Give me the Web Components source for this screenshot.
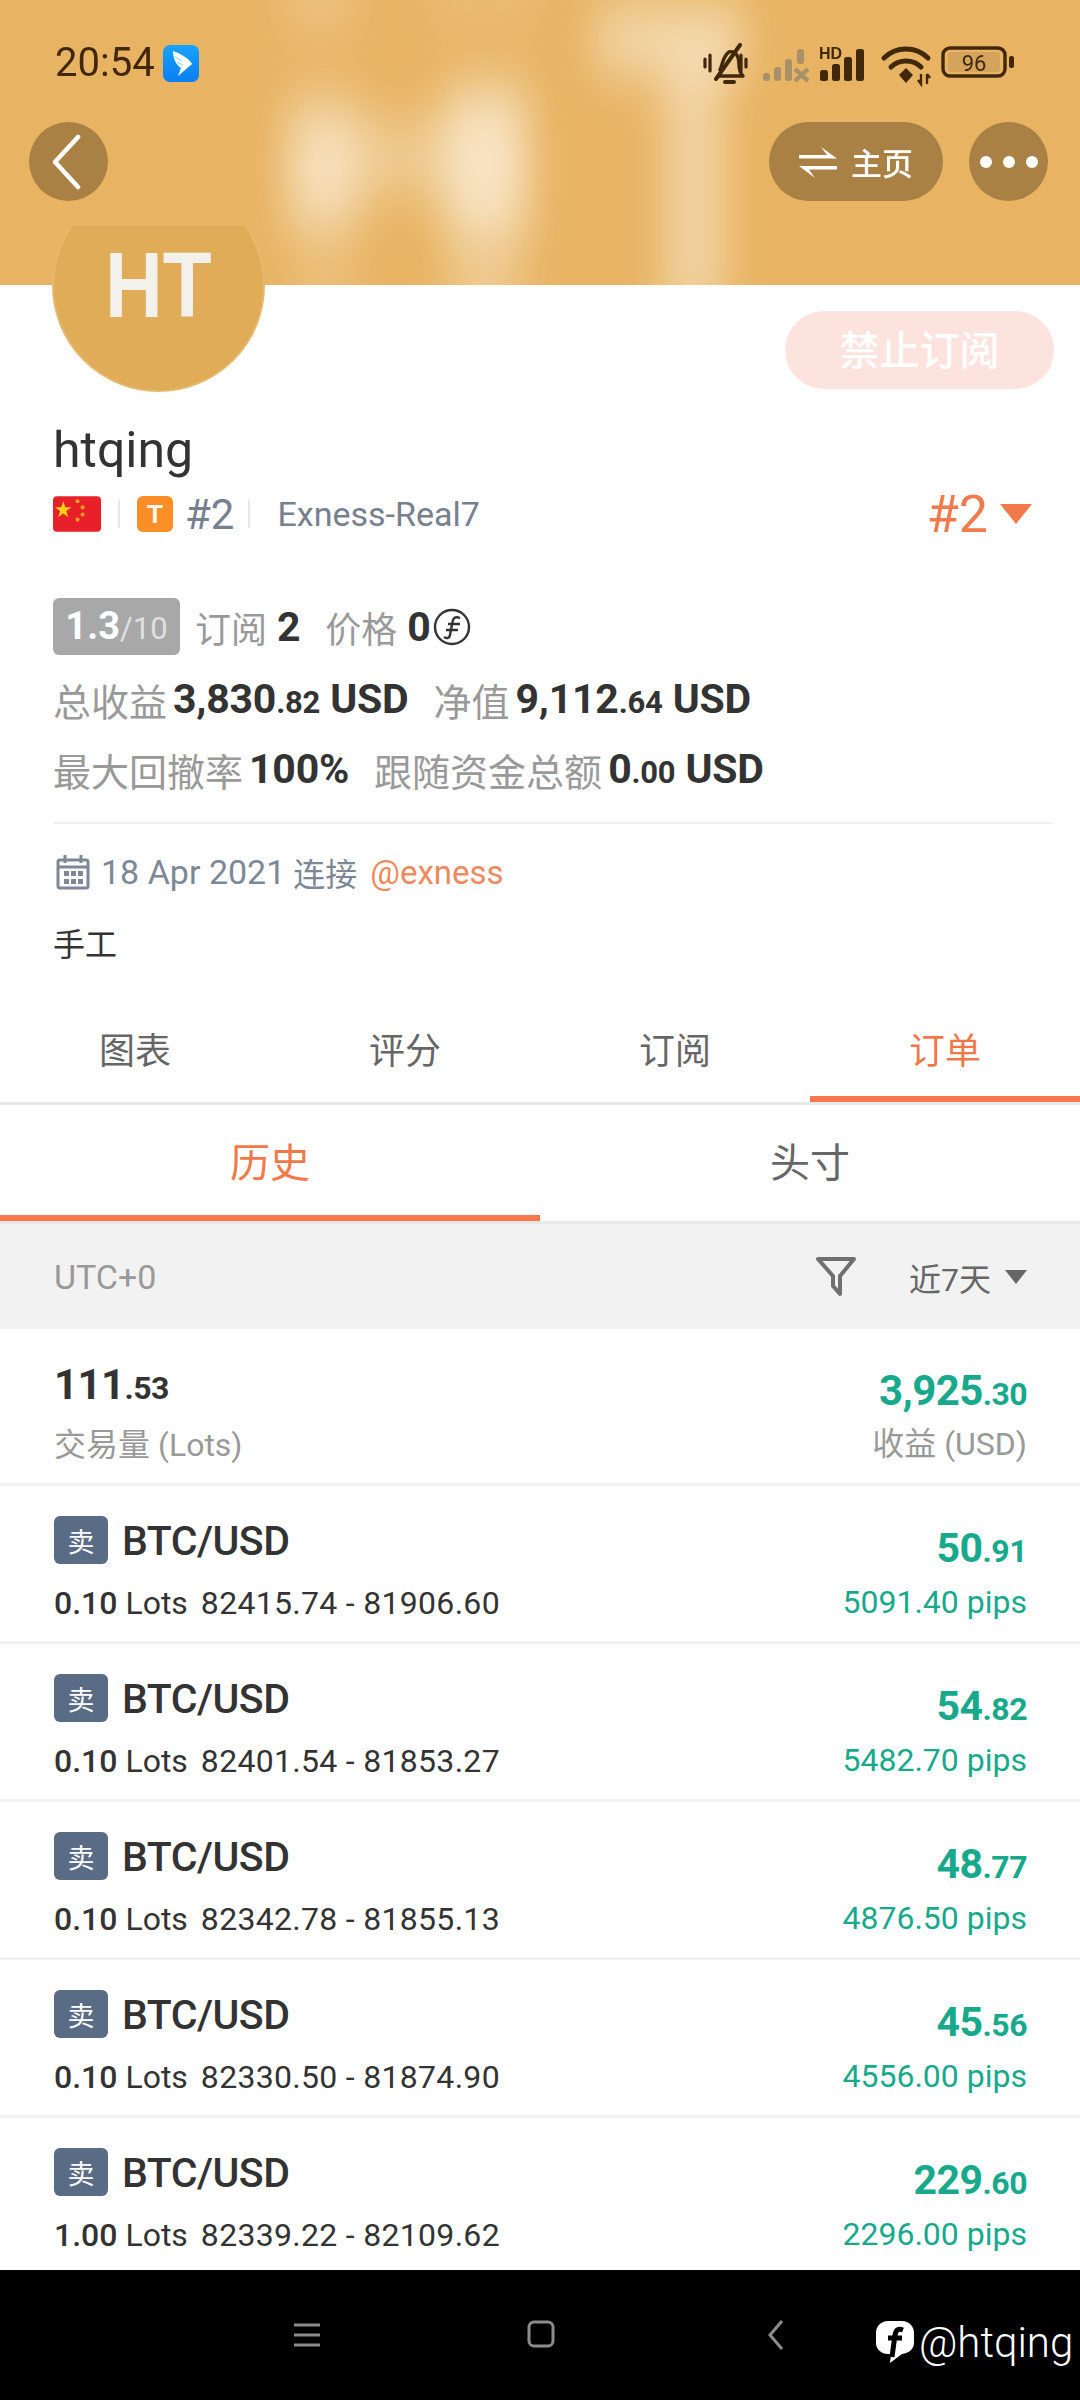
<!DOCTYPE html>
<html lang="zh">
<head>
<meta charset="utf-8">
<title>htqing</title>
<style>
  html, body { margin: 0; padding: 0; background: #fff; }
  body { width: 1080px; height: 2400px; overflow: hidden; font-family: Roboto, "Noto Sans CJK SC", sans-serif; }
</style>
</head>
<body>
<profile-header></profile-header>
<trader-info></trader-info>
<tab-bar items="图表,评分,订阅,订单" active="3" size="36" height="99" shift="12"></tab-bar>
<tab-bar items="历史,头寸" active="0" size="40" height="119" shift="6"></tab-bar>
<filter-bar></filter-bar>
<order-summary></order-summary>
<order-row lots="0.10" prices="82415.74 - 81906.60" amount="50" cents="91" pips="5091.40 pips"></order-row>
<order-row lots="0.10" prices="82401.54 - 81853.27" amount="54" cents="82" pips="5482.70 pips"></order-row>
<order-row lots="0.10" prices="82342.78 - 81855.13" amount="48" cents="77" pips="4876.50 pips"></order-row>
<order-row lots="0.10" prices="82330.50 - 81874.90" amount="45" cents="56" pips="4556.00 pips"></order-row>
<order-row lots="1.00" prices="82339.22 - 82109.62" amount="229" cents="60" pips="2296.00 pips" last></order-row>
<nav-bar></nav-bar>

<script>
const CJK = 'Roboto, "Noto Sans CJK SC", sans-serif';

// шапка: статус-бар, кнопки, аватар
class ProfileHeader extends HTMLElement {
  connectedCallback() {
    this.attachShadow({ mode: 'open' });
    this.shadowRoot.innerHTML = `
      <style>
        :host { display: block; position: relative; height: 285px; background: #e8b464; font-family: ${CJK}; overflow: visible; }
        .blur { position: absolute; inset: 0; width: 1080px; height: 285px; }
        .status { position: relative; display: flex; align-items: center; height: 44px; padding: 41px 0 0 55px; }
        .time { font-size: 40px; color: #41280a; line-height: 44px; width: 108px; }
        .icons { margin-left: auto; display: flex; align-items: center; width: 377px; height: 44px; }
        .icons svg { margin-top: 4px; }
        .actions { position: relative; display: flex; align-items: center; padding: 37px 32px 0 29px; }
        .round { width: 79px; height: 79px; border-radius: 50%; background: #a98144; display: flex; align-items: center; justify-content: center; }
        .pill { margin-left: auto; width: 174px; height: 79px; border-radius: 40px; background: #a98144; display: flex; align-items: center; justify-content: center; gap: 14px; color: #fff; font-size: 31px; font-weight: 500; margin-right: 26px; }
        .dots { gap: 11px; }
        .dots i { width: 12px; height: 12px; border-radius: 50%; background: #fff; }
        .avatar { position: absolute; left: 52px; top: 226px; width: 213px; height: 167px; overflow: hidden; z-index: 2; }
        .circle { width: 213px; height: 213px; margin-top: -47px; border-radius: 50%; background: #e0ac58; box-sizing: border-box; border: 2px solid #e6b86e; display: flex; align-items: center; justify-content: center; color: #f3f1ec; font-size: 92px; font-weight: 700; font-family: "Liberation Sans", sans-serif; }
        .circle span { display: inline-block; transform: scaleX(.87); }
      </style>
      <svg class="blur" viewBox="0 0 1080 285" aria-hidden="true">
        <defs><filter id="b" x="-80%" y="-80%" width="260%" height="260%"><feGaussianBlur stdDeviation="20 30"/></filter></defs>
        <g filter="url(#b)" fill="#f9e8cc">
          <rect x="288" y="105" width="70" height="125" opacity=".85"/>
          <rect x="445" y="90" width="82" height="150" opacity=".92"/>
          <rect x="350" y="130" width="100" height="55" opacity=".6"/>
          <rect x="595" y="10" width="150" height="58" opacity=".8"/>
          <rect x="664" y="40" width="60" height="290" opacity=".6"/>
          <rect x="285" y="-50" width="70" height="80" opacity=".3"/>
          <rect x="430" y="-50" width="110" height="70" opacity=".2"/>
          <rect x="300" y="262" width="50" height="70" opacity=".3"/>
          <rect x="450" y="262" width="70" height="70" opacity=".5"/>
        </g>
      </svg>
      <div class="status">
        <span class="time">20:54</span>
        <svg width="36" height="37" viewBox="0 0 36 37">
          <defs><linearGradient id="fs" x1="0" y1="0" x2="0" y2="1"><stop offset="0" stop-color="#17a3fb"/><stop offset="1" stop-color="#0b7ff0"/></linearGradient></defs>
          <rect width="36" height="37" rx="7" fill="url(#fs)"/>
          <path d="M10 6 C17 8 27 14 29 19 L15 31 L18 23 C13 20 10 13 10 6Z" fill="#fff"/>
          <path d="M12 12 L19 16 M14 17 L20 20" stroke="#9fd4fb" stroke-width="1.2"/>
        </svg>
        <div class="icons">
          <svg width="377" height="44" viewBox="0 0 377 44" fill="none">
            <!-- колокольчик без звука -->
            <g stroke="#41280a" stroke-linecap="round">
              <path d="M17 27 C20 20 20 13 26 9 C33 7 36 14 36 21 C36 26 37 30 40 33 L16 33" stroke-width="3.4" stroke-linejoin="round"/>
              <path d="M13 36 L37 2" stroke-width="4"/>
              <path d="M2 16V24 M7 12V28 M38 12V28 M43 16V24" stroke-width="3.2"/>
              <path d="M22 39 H31" stroke-width="4"/>
            </g>
            <!-- сигнал sim1 -->
            <g fill="#a89068">
              <rect x="60" y="30" width="7" height="8" rx="3"/>
              <rect x="71" y="24" width="7" height="14" rx="3"/>
              <rect x="82" y="16" width="7" height="22" rx="3"/>
              <rect x="94" y="6" width="7" height="15" rx="3"/>
            </g>
            <path d="M92 26 L105 38 M105 26 L92 38" stroke="#a89068" stroke-width="4.4"/>
            <!-- сигнал sim2 с HD -->
            <text x="116" y="16" font-family="Liberation Sans, sans-serif" font-weight="700" font-size="16" fill="#41280a">HD</text>
            <g fill="#41280a">
              <rect x="117" y="27" width="8" height="11" rx="2.5"/>
              <rect x="129" y="21" width="8" height="17" rx="2.5"/>
              <rect x="141" y="14" width="8" height="24" rx="2.5"/>
              <rect x="153" y="6" width="8" height="32" rx="2.5"/>
            </g>
            <!-- wifi -->
            <g stroke="#41280a" stroke-width="5" stroke-linecap="round">
              <path d="M181 15 C193 3 213 3 225 15"/>
              <path d="M188 24 C196 16 210 16 218 24"/>
            </g>
            <path d="M196 32 L203 25 L210 32 L203 40Z" fill="#41280a"/>
            <path d="M218 31V40 M215 37L218 41L218 37 M224 31V41 M224 31L227 35" stroke="#41280a" stroke-width="2.4"/>
            <!-- батарея -->
            <rect x="240" y="5" width="62" height="28" rx="7" stroke="#41280a" stroke-width="3.4"/>
            <rect x="245" y="9" width="52" height="20" rx="3" fill="#d4a45c"/>
            <rect x="306" y="13" width="5" height="12" rx="2" fill="#41280a"/>
            <text x="271" y="28" text-anchor="middle" font-family="Roboto, sans-serif" font-size="22" fill="#41280a">96</text>
          </svg>
        </div>
      </div>
      <div class="actions">
        <div class="round">
          <svg width="30" height="56" viewBox="0 0 30 56" fill="none" style="margin-right:6px"><path d="M27 3 L4 28 L27 53" stroke="#fff" stroke-width="4.6" stroke-linecap="round" stroke-linejoin="round"/></svg>
        </div>
        <div class="pill">
          <svg width="38" height="34" viewBox="0 0 38 34" fill="#fff"><path d="M0 10H28L22 2L38 13.5H0Z"/><path d="M38 21H0L16 33L10 24.5H38Z"/></svg>
          <span>主页</span>
        </div>
        <div class="round dots"><i></i><i></i><i></i></div>
      </div>
      <div class="avatar"><div class="circle"><span>HT</span></div></div>`;
  }
}

// блок с именем и статистикой
class TraderInfo extends HTMLElement {
  connectedCallback() {
    this.attachShadow({ mode: 'open' });
    this.shadowRoot.innerHTML = `
      <style>
        :host { display: block; height: 721px; box-sizing: border-box; padding: 26px 26px 0 53px; font-family: ${CJK}; color: #999; }
        .btnrow { display: flex; justify-content: flex-end; }
        .off { width: 269px; height: 78px; border-radius: 39px; background: #fde3dd; color: #fff; font-size: 40px; font-weight: 500; display: flex; align-items: center; justify-content: center; padding-bottom: 4px; box-sizing: border-box; }
        .name { font-size: 50px; line-height: 60px; color: #333; margin-top: 31px; }
        .meta { display: flex; align-items: center; height: 50px; margin-top: 9px; color: #77808f; }
        .flag { display: block; flex: none; }
        .sep { width: 2px; height: 28px; background: #e8e8e8; flex: none; }
        .tag { width: 36px; height: 36px; border-radius: 6px; background: #fb8e27; color: #fff9ea; font: 700 26px "Liberation Sans", sans-serif; display: flex; align-items: center; justify-content: center; }
        .rank { font-size: 42px; }
        .broker { font-size: 34px; }
        .top { margin-left: auto; display: flex; align-items: center; color: #f37a4b; font-size: 52px; padding-right: 22px; }
        .top svg { margin-left: 12px; }
        .line { display: flex; align-items: center; font-size: 38px; }
        .line b { color: #333; font-weight: 700; font-size: 41px; letter-spacing: -.2px; margin-left: 6px; margin-right: 25px; }
        .line b small { font-size: 31px; }
        .score { height: 57px; margin-top: 59px; font-size: 36px; }
        .badge { width: 127px; height: 57px; background: #a8a8a8; border-radius: 6px; color: #fff; font-weight: 700; font-size: 38px; display: flex; align-items: baseline; justify-content: center; line-height: 57px; margin-right: 15px; }
        .badge span { font-size: 31px; font-weight: 400; opacity: .65; }
        .l1 { height: 70px; margin-top: 9px; }
        .l2 { height: 70px; }
        .rule { height: 2px; background: #f0f0f0; margin-top: 18px; }
        .date { display: flex; align-items: center; height: 50px; margin-top: 23px; font-size: 34px; color: #7d8796; }
        .date span { margin-left: 8px; font-size: 32px; }
        .date a { color: #ee8a5f; margin-left: 13px; font-size: 33px; }
        .bio { font-size: 32px; line-height: 46px; color: #333; margin-top: 25px; }
      </style>
      <div class="btnrow"><div class="off">禁止订阅</div></div>
      <div class="name">htqing</div>
      <div class="meta">
        <svg class="flag" width="48" height="36" viewBox="0 0 47 35"><rect width="47" height="35" rx="4" fill="#e8202a"/><path d="M10 5l2 6h6l-5 3.6 2 6-5-3.7-5 3.7 2-6L2 11h6z" fill="#fcd116"/><g fill="#e8a021"><circle cx="24" cy="5" r="2"/><circle cx="29" cy="11" r="2"/><circle cx="29" cy="18" r="2"/><circle cx="24" cy="23" r="2"/></g></svg>
        <div class="sep" style="margin:0 17px 0 17px"></div>
        <div class="tag">T</div>
        <span class="rank" style="margin-left:12px;margin-right:14px">#2</span>
        <div class="sep" style="margin-right:27px"></div>
        <span class="broker">Exness-Real7</span>
        <div class="top">#2<svg width="32" height="20" viewBox="0 0 32 20"><path d="M0 0H32L16 20Z" fill="#f37a4b"/></svg></div>
      </div>
      <div class="line score">
        <div class="badge">1.3<span>/10</span></div>
        订阅<b style="margin-left:10px;margin-right:25px">2</b>价格<b style="margin-left:10px;margin-right:2px">0</b>
        <svg width="38" height="38" viewBox="0 0 38 38" fill="none" stroke="#333" stroke-width="2.4" style="flex:none"><circle cx="19" cy="19" r="17"/><path d="M27 10 C22 8 20 10 19.5 14 L17 27 C16.5 30 14 31 11 29 M15 16H27 M13 22H25"/></svg>
      </div>
      <div class="line l1">总收益<b>3,830<small>.82</small> USD</b>净值<b>9,112<small>.64</small> USD</b></div>
      <div class="line l2">最大回撤率<b>100%</b>跟随资金总额<b>0<small>.00</small> USD</b></div>
      <div class="rule"></div>
      <div class="date">
        <svg width="36" height="36" viewBox="0 0 36 36" fill="none" stroke="#7d8796" stroke-width="3" style="margin-right:10px;margin-left:2px;flex:none"><rect x="3" y="6" width="30" height="28" rx="2"/><path d="M10 1V9 M26 1V9 M3 13H33"/><g fill="#7d8796" stroke="none"><rect x="9" y="17" width="5" height="5"/><rect x="16" y="17" width="5" height="5"/><rect x="23" y="17" width="5" height="5"/><rect x="9" y="25" width="5" height="5"/><rect x="16" y="25" width="5" height="5"/><rect x="23" y="25" width="5" height="5"/></g></svg>
        18 Apr 2021<span>连接</span><a>@exness</a>
      </div>
      <div class="bio">手工</div>`;
  }
}

// вкладки, список берется из атрибута items
class TabBar extends HTMLElement {
  connectedCallback() {
    this.attachShadow({ mode: 'open' });
    const items = this.getAttribute('items').split(',');
    const active = parseInt(this.getAttribute('active'), 10);
    const size = this.getAttribute('size');
    const height = this.getAttribute('height');
    const shift = this.getAttribute('shift');
    this.shadowRoot.innerHTML = `
      <style>
        :host { display: block; font-family: ${CJK}; }
        .bar { display: grid; grid-template-columns: repeat(${items.length}, 1fr); height: ${height}px; box-sizing: border-box; border-bottom: 3px solid #e8e8e8; }
        .tab { display: flex; align-items: center; justify-content: center; font-size: ${size}px; color: #666; box-sizing: border-box; height: ${height - 3}px; padding-bottom: ${shift}px; }
        .tab.on { color: #f0794a; border-bottom: 6px solid #f8784b; padding-bottom: ${shift - 6}px; }
      </style>
      <div class="bar">
        ${items.map((t, i) => `<div class="tab${i === active ? ' on' : ''}">${t}</div>`).join('')}
      </div>`;
  }
}

class FilterBar extends HTMLElement {
  connectedCallback() {
    this.attachShadow({ mode: 'open' });
    this.shadowRoot.innerHTML = `
      <style>
        :host { display: flex; align-items: center; height: 105px; background: #f2f2f2; padding: 0 53px 0 54px; font-family: ${CJK}; }
        .utc { font-size: 34px; color: #999; }
        .range { font-size: 32px; color: #666; margin: 0 14px 0 52px; }
      </style>
      <span class="utc">UTC+0</span>
      <svg style="margin-left:auto" width="42" height="42" viewBox="0 0 42 42" fill="none" stroke="#707070" stroke-width="4"><path d="M3 3H39L25 20V38L18 30V20Z" stroke-linejoin="round"/></svg>
      <span class="range">近7天</span>
      <svg width="22" height="14" viewBox="0 0 22 14"><path d="M0 0H22L11 14Z" fill="#666"/></svg>`;
  }
}

class OrderSummary extends HTMLElement {
  connectedCallback() {
    this.attachShadow({ mode: 'open' });
    this.shadowRoot.innerHTML = `
      <style>
        :host { display: flex; justify-content: space-between; height: 157px; box-sizing: border-box; padding: 28px 53px 0 54px; border-bottom: 3px solid #f2f2f2; font-family: ${CJK}; }
        .col { display: flex; flex-direction: column; }
        .right { align-items: flex-end; padding-top: 6px; }
        .num { font-size: 42px; font-weight: 700; line-height: 56px; color: #333; letter-spacing: -.6px; }
        .num small { font-size: 32px; }
        .green { color: #18a98d; }
        .cap { font-size: 32px; line-height: 44px; color: #999; margin-top: 7px; }
        .right .cap { margin-top: 0; }
      </style>
      <div class="col"><div class="num">111<small>.53</small></div><div class="cap">交易量 (Lots)</div></div>
      <div class="col right"><div class="num green">3,925<small>.30</small></div><div class="cap">收益 (USD)</div></div>`;
  }
}

// строка ордера, значения из атрибутов
class OrderRow extends HTMLElement {
  connectedCallback() {
    this.attachShadow({ mode: 'open' });
    const a = (n) => this.getAttribute(n);
    this.shadowRoot.innerHTML = `
      <style>
        :host { display: flex; justify-content: space-between; height: 158px; box-sizing: border-box; padding: 30px 53px 0 54px; border-bottom: 3px solid #f2f2f2; font-family: ${CJK}; }
        :host([last]) { border-bottom: 0; height: 152px; }
        .head { display: flex; align-items: center; height: 48px; }
        .side { width: 54px; height: 48px; border-radius: 6px; background: #5a6b85; color: #fff; font-size: 27px; display: flex; align-items: center; justify-content: center; margin-right: 14px; }
        .pair { font-size: 41px; font-weight: 500; color: #333; letter-spacing: -.5px; padding-top: 2px; }
        .sub { font-size: 32px; line-height: 44px; color: #333; margin-top: 17px; }
        .sub b { font-weight: 500; }
        .sub span { margin-left: 13px; letter-spacing: .3px; }
        .right { display: flex; flex-direction: column; align-items: flex-end; }
        .amt { font-size: 41px; font-weight: 700; line-height: 48px; margin-top: 8px; color: #18a98d; letter-spacing: -.5px; }
        .amt small { font-size: 32px; }
        .pips { font-size: 32px; line-height: 44px; margin-top: 5px; color: #18a98d; }
      </style>
      <div>
        <div class="head"><div class="side">卖</div><div class="pair">BTC/USD</div></div>
        <div class="sub"><b>${a('lots')}</b> Lots<span>${a('prices')}</span></div>
      </div>
      <div class="right">
        <div class="amt">${a('amount')}<small>.${a('cents')}</small></div>
        <div class="pips">${a('pips')}</div>
      </div>`;
  }
}

class NavBar extends HTMLElement {
  connectedCallback() {
    this.attachShadow({ mode: 'open' });
    this.shadowRoot.innerHTML = `
      <style>
        :host { display: flex; align-items: flex-start; height: 130px; background: #000; padding: 50px 0 0 294px; box-sizing: border-box; font-family: ${CJK}; }
        .mark { display: flex; align-items: center; margin-left: 92px; height: 44px; color: #fff; font-size: 42px; font-weight: 300; white-space: nowrap; }
      </style>
      <svg width="26" height="24" viewBox="0 0 26 24" stroke="#8c8c8c" stroke-width="3" style="margin-top:3px;flex:none"><path d="M0 2H26 M0 12H26 M0 22H26"/></svg>
      <svg width="28" height="28" viewBox="0 0 28 28" fill="none" stroke="#8c8c8c" stroke-width="3" style="margin-left:207px;flex:none"><rect x="2" y="2" width="24" height="24" rx="5"/></svg>
      <svg width="16" height="30" viewBox="0 0 16 30" fill="none" stroke="#8c8c8c" stroke-width="3" style="margin-left:213px;flex:none"><path d="M14 1L2 15L14 29"/></svg>
      <div class="mark">
        <svg width="38" height="43" viewBox="0 0 38 43" style="margin-right:5px;flex:none"><path d="M12 0H26C33 0 38 5 38 12V22C38 28 33 32 26 33L14 42L15 33H12C5 33 0 28 0 22V12C0 5 5 0 12 0Z" fill="#fff"/><path d="M27 9C22 7 20 9 19 14L16 36 M12 17H26" stroke="#000" stroke-width="5" fill="none"/></svg>
        <span>@htqing</span>
      </div>`;
  }
}

customElements.define('profile-header', ProfileHeader);
customElements.define('trader-info', TraderInfo);
customElements.define('tab-bar', TabBar);
customElements.define('filter-bar', FilterBar);
customElements.define('order-summary', OrderSummary);
customElements.define('order-row', OrderRow);
customElements.define('nav-bar', NavBar);
</script>
</body>
</html>
